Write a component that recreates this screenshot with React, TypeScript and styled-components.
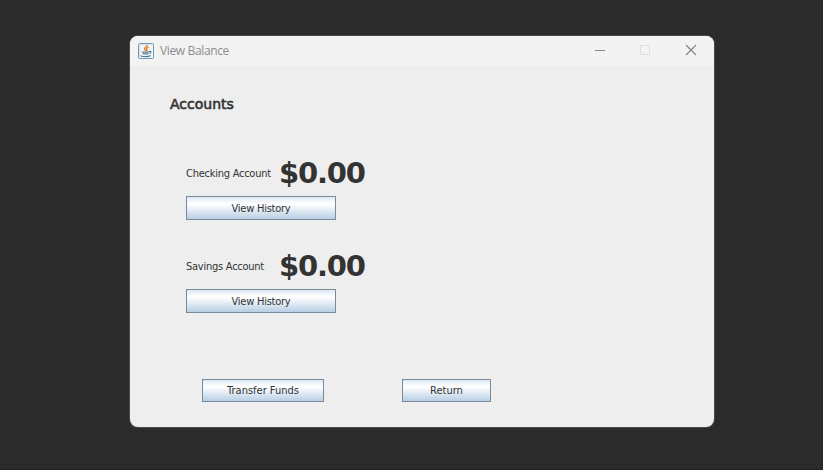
import React from "react";
import styled, { createGlobalStyle } from "styled-components";

const GlobalStyle = createGlobalStyle`
  * { box-sizing: border-box; }
  body { margin: 0; background: #2b2b2b; }
`;

const Desktop = styled.main`
  width: 823px;
  height: 470px;
  padding: 36px 0 0 130px;
  background: #2b2b2b;
  border-bottom: 1px solid #232323;
  overflow: hidden;
`;

const Window = styled.section`
  display: flex;
  flex-direction: column;
  width: 584px;
  height: 391px;
  border-radius: 8px;
  background: #eeeeee;
  box-shadow: 0 0 0 1px #4b4b4b;
  overflow: hidden;
  color: #333333;
  font-family: "DejaVu Sans Condensed", "DejaVu Sans", sans-serif;
`;

const TitleBar = styled.header`
  display: flex;
  align-items: center;
  flex: none;
  height: 30px;
  padding-left: 8px;
  background: #f3f3f3;
`;

const Title = styled.h1`
  flex: 1;
  margin: 0 0 0 6px;
  font: 400 12px/16px "Open Sans", "Noto Sans", sans-serif;
  letter-spacing: -0.36px;
  color: #8c8c8c;
`;

const Controls = styled.div`
  display: flex;
  height: 28px;
  align-self: flex-start;
`;

const Control = styled.button`
  display: grid;
  place-items: center;
  width: 46px;
  padding: 0;
  border: 0;
  background: none;
`;

const Content = styled.div`
  padding: 29px 0 0 39px;
`;

const Heading = styled.h2`
  margin: 0;
  height: 18px;
  padding-left: 1px;
  font: 400 14px/18px "DejaVu Sans", sans-serif;
  -webkit-text-stroke: 0.6px #333333;
`;

const Accounts = styled.div`
  display: grid;
  gap: 29px;
  padding: 43px 0 0 17px;
`;

const Account = styled.article`
  height: 64px;
`;

const Balance = styled.div`
  display: grid;
  grid-template-columns: 93px auto;
  align-items: center;
  height: 40px;
  padding-bottom: 5px;
`;

const AccountName = styled.span`
  font-size: 11px;
  line-height: 15px;
  white-space: nowrap;
  letter-spacing: -0.25px;
`;

const Amount = styled.strong`
  font: 700 29px/35px "DejaVu Sans", sans-serif;
  letter-spacing: -1.2px;
`;

const MetalButton = styled.button<{ $width: number; $height?: number; $spacing?: number }>`
  display: block;
  width: ${(p) => p.$width}px;
  height: ${(p) => p.$height ?? 24}px;
  padding: 1px 0 0 0;
  border: 1px solid #7a8a99;
  background: linear-gradient(#dde8f3 0%, #ffffff 30%, #ffffff 33%, #b8cfe5 100%);
  color: #333333;
  font: 11px/20px "DejaVu Sans Condensed", "DejaVu Sans", sans-serif;
  letter-spacing: ${(p) => p.$spacing ?? 0}px;
`;

const Footer = styled.div`
  display: flex;
  gap: 78px;
  padding: 66px 0 0 33px;
`;

const JavaIcon = () => (
  <svg width="16" height="16" viewBox="0 0 16 16" fill="none">
    <rect x="0.5" y="0.5" width="15" height="15" rx="1" fill="#f3f5f6" stroke="#7798b0" />
    <path d="M1.5 14.5V1.5h13" stroke="#d3e0e8" />
    <path d="M9 1.8c.6 2.2-3.8 2.9-2.4 4.9.4.6.9.7 1.1 1.3M10.9 4C8.7 4.9 7.7 5.7 8.9 7c.4.5 0 1-.5 1.5" stroke="#e77b20" strokeWidth="1.3" />
    <path d="M4.2 8.7c-.8.7 5.3.8 6.6 0M4.8 10.5c.9.6 4.4.6 5.5 0M3.2 12.4c-1.8 1.4 7.6 1.7 9.4.1M11 8.5c2.8-.8 2.5 1.6.2 2" stroke="#487b9e" strokeWidth="1.1" />
  </svg>
);

const MinimizeIcon = () => (
  <svg width="12" height="12" fill="none"><path d="M2 6.5h10" stroke="#858585" /></svg>
);

const MaximizeIcon = () => (
  <svg width="12" height="12" fill="none"><rect x="1.5" y="1.5" width="9" height="9" rx=".5" stroke="#dedede" /></svg>
);

const CloseIcon = () => (
  <svg width="12" height="12" fill="none"><path d="m1 1 10 10M11 1 1 11" stroke="#828282" strokeWidth="1.1" /></svg>
);

const accounts = [
  { name: "Checking Account", balance: "$0.00" },
  { name: "Savings Account", balance: "$0.00" },
];

export default function App() {
  return (
    <>
      <GlobalStyle />
      <Desktop>
        <Window>
          <TitleBar>
            <JavaIcon />
            <Title>View Balance</Title>
            <Controls>
              <Control aria-label="Minimize"><MinimizeIcon /></Control>
              <Control aria-label="Maximize" disabled><MaximizeIcon /></Control>
              <Control aria-label="Close"><CloseIcon /></Control>
            </Controls>
          </TitleBar>
          <Content>
            <Heading>Accounts</Heading>
            <Accounts>
              {accounts.map((a) => (
                <Account key={a.name}>
                  <Balance>
                    <AccountName>{a.name}</AccountName>
                    <Amount>{a.balance}</Amount>
                  </Balance>
                  <MetalButton $width={150} $spacing={-0.25}>View History</MetalButton>
                </Account>
              ))}
            </Accounts>
            <Footer>
              <MetalButton $width={122} $height={23}>Transfer Funds</MetalButton>
              <MetalButton $width={89} $height={23}>Return</MetalButton>
            </Footer>
          </Content>
        </Window>
      </Desktop>
    </>
  );
}
